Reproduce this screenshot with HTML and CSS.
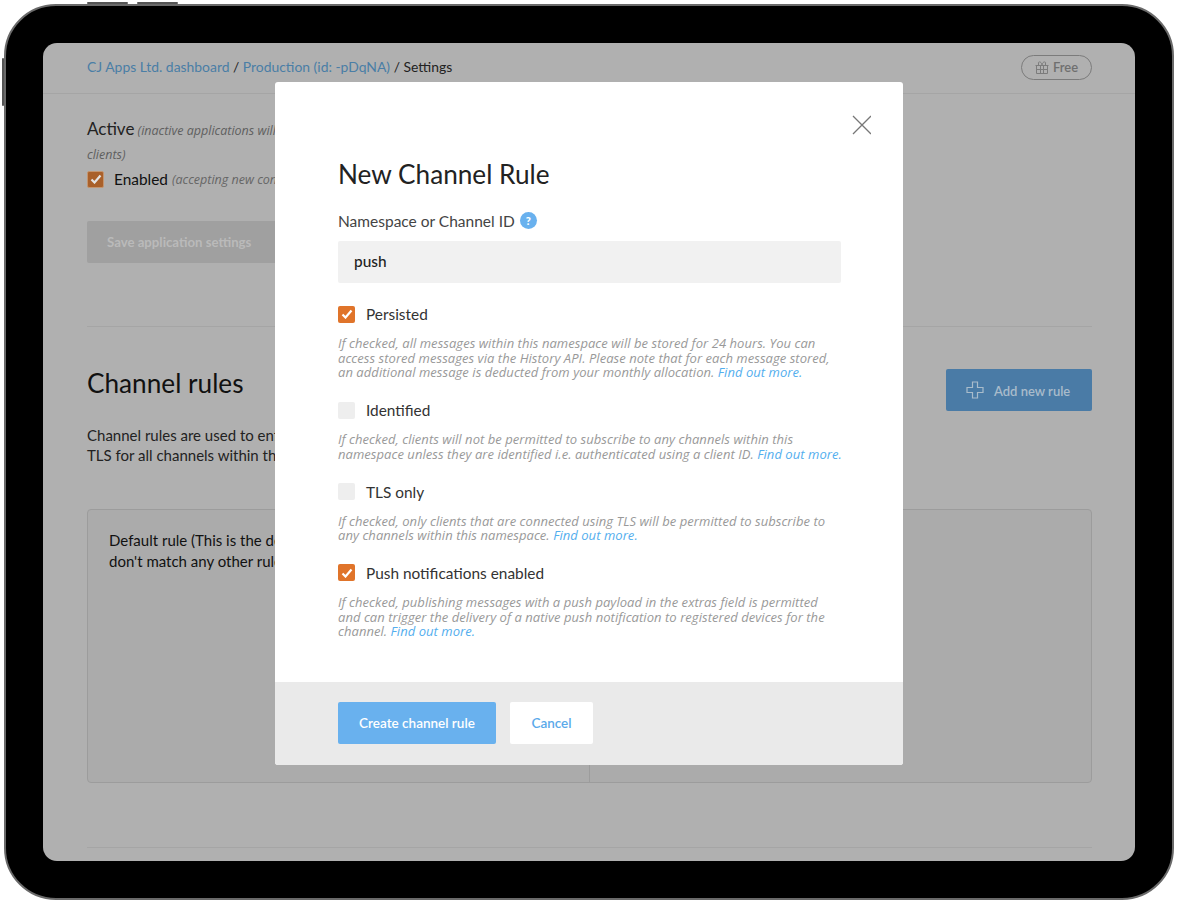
FILE: index.html
```html
<!DOCTYPE html>
<html lang="en">
<head>
    <meta charset="UTF-8">
    <title>Settings | CJ Apps Ltd.</title>
    <link rel="stylesheet" href="styles.css">
</head>
<body>
    <div class="device">
        <span class="side-btn top-a"></span>
        <span class="side-btn top-b"></span>
        <span class="side-btn left-a"></span>
        <div class="screen">
            <header class="topbar">
                <div class="crumbs"><a>CJ Apps Ltd. dashboard</a> / <a>Production (id: -pDqNA)</a> / Settings</div>
                <div class="plan">
                    <svg width="14" height="13" viewBox="0 0 14 13" fill="none" stroke="#7c7c7c" stroke-width="1">
                        <path d="M1.500 4.500h11v8h-11zM.5 4.500h13M1.500 8.500h11M5.500 4.500v8M8.500 4.500v8M3.500 4.500V1.500c0-1 3.500-1 3.500 3M10.500 4.500V1.500c0-1-3.500-1-3.500 3"/>
                    </svg>
                    Free
                </div>
            </header>

            <section class="settings">
                <p class="active"><span class="big">Active</span> <em>(inactive applications will not<br>clients)</em></p>
                <div class="enabled">
                    <span class="check dim"><svg width="12" height="10" viewBox="0 0 12 10"><path d="M1.500 5.500l3 3 6-7" fill="none" stroke="#e4e4e4" stroke-width="2.200"/></svg></span>
                    <span class="enabled-text">Enabled</span> <em>(accepting new connections)</em>
                </div>
                <div class="save-btn">Save application settings</div>
            </section>

            <section class="rules">
                <div class="rules-head">
                    <h2>Channel rules</h2>
                    <div class="add-btn">
                        <svg width="18" height="18" viewBox="0 0 18 18" fill="none" stroke="#a9bccb" stroke-width="1.200">
                            <path d="M6.500 1h5v5.500H17v5h-5.500V17h-5v-5.500H1v-5h5.500z"/>
                        </svg>
                        <span>Add new rule</span>
                    </div>
                </div>
                <p class="rules-text">Channel rules are used to enforce<br>TLS for all channels within this</p>
                <div class="rule-table">
                    <div class="rule-cell">Default rule (This is the default<br>don't match any other rules)</div>
                    <div class="rule-cell"></div>
                </div>
            </section>
            <div class="bottom-line"></div>

            <div class="modal">
                <button class="close" aria-label="Close">
                    <svg width="20" height="20" viewBox="0 0 20 20" stroke="#777" stroke-width="1.300"><path d="M2 1l18 18M20 1L2 19"/></svg>
                </button>
                <div class="modal-body">
                    <h1>New Channel Rule</h1>
                    <div class="field-label">Namespace or Channel ID <span class="help">?</span></div>
                    <div class="input">push</div>

                    <div class="opt">
                        <span class="check on"><svg width="12" height="10" viewBox="0 0 12 10"><path d="M1.500 5.500l3 3 6-7" fill="none" stroke="#fff" stroke-width="2.200"/></svg></span>
                        Persisted
                    </div>
                    <p class="hint">If checked, all messages within this namespace will be stored for 24 hours. You can<br>access stored messages via the History API. Please note that for each message stored,<br>an additional message is deducted from your monthly allocation. <a>Find out more.</a></p>

                    <div class="opt">
                        <span class="check"></span>
                        Identified
                    </div>
                    <p class="hint">If checked, clients will not be permitted to subscribe to any channels within this<br>namespace unless they are identified i.e. authenticated using a client ID. <a>Find out more.</a></p>

                    <div class="opt">
                        <span class="check"></span>
                        TLS only
                    </div>
                    <p class="hint">If checked, only clients that are connected using TLS will be permitted to subscribe to<br>any channels within this namespace. <a>Find out more.</a></p>

                    <div class="opt">
                        <span class="check on"><svg width="12" height="10" viewBox="0 0 12 10"><path d="M1.500 5.500l3 3 6-7" fill="none" stroke="#fff" stroke-width="2.200"/></svg></span>
                        Push notifications enabled
                    </div>
                    <p class="hint">If checked, publishing messages with a push payload in the extras field is permitted<br>and can trigger the delivery of a native push notification to registered devices for the<br>channel. <a>Find out more.</a></p>
                </div>
                <div class="modal-foot">
                    <div class="btn primary">Create channel rule</div>
                    <div class="btn cancel">Cancel</div>
                </div>
            </div>
        </div>
    </div>
</body>
</html>
```

FILE: styles.css
```css
* {
    box-sizing: border-box;
}
body {
    margin: 0;
    background-color: #fff;
    font-family: Lato, "Open Sans", sans-serif;
    color: #222;
}
em {
    font-family: "Open Sans", sans-serif;
    font-style: italic;
}

/* tablet frame */
.device {
    position: relative;
    width: 1170px;
    height: 896px;
    margin: 4px 0 0 4px;
    padding: 37px 37px 36px 37px;
    background-color: #000;
    border: 2px solid #6a6a6a;
    border-radius: 52px;
}
.side-btn {
    position: absolute;
    background-color: #555;
    border-radius: 1px;
}
.top-a {
    top: -4px;
    left: 81px;
    width: 41px;
    height: 2px;
}
.top-b {
    top: -4px;
    left: 131px;
    width: 41px;
    height: 2px;
}
.left-a {
    top: 52px;
    left: -4px;
    width: 2px;
    height: 48px;
}
.screen {
    position: relative;
    height: 818px;
    padding: 0 43px 0 44px;
    background-color: #b0b0b0;
    border-radius: 14px;
    overflow: hidden;
    font-size: 14px;
}

/* dimmed page behind the modal */
.topbar {
    display: flex;
    justify-content: space-between;
    align-items: center;
    height: 51px;
    margin: 0 -43px 0 -44px;
    padding: 0 43px 2px 44px;
    border-bottom: 1px solid #a5a5a5;
    font-size: 13.900px;
}
.crumbs {
    margin-bottom: 2px;
}
.crumbs a {
    color: #4a7ea6;
}
.plan {
    display: flex;
    align-items: center;
    justify-content: center;
    gap: 4px;
    width: 71px;
    height: 25px;
    border: 1px solid #7b7b7b;
    border-radius: 13px;
    color: #6f6f6f;
    font-size: 13px;
    font-weight: 600;
}
.settings {
    padding-top: 23px;
    height: 233px;
    border-bottom: 1px solid #a5a5a5;
}
.active {
    margin: 0;
    line-height: 24px;
    color: #5f5f5f;
    font-size: 12.500px;
}
.big {
    color: #222;
    font-size: 17px;
}
.enabled {
    display: flex;
    align-items: center;
    gap: 4px;
    margin-top: 3px;
    font-size: 12.500px;
    color: #666;
}
.enabled-text {
    color: #111;
    font-size: 15.400px;
    margin-left: 6px;
}
.save-btn {
    width: 240px;
    height: 42px;
    margin-top: 33px;
    padding-left: 20px;
    background-color: #a0a0a0;
    border-radius: 2px;
    color: #bababa;
    font-size: 13.200px;
    font-weight: 700;
    line-height: 42px;
}
.rules {
    padding-top: 42px;
}
.rules-head {
    display: flex;
    justify-content: space-between;
    align-items: flex-start;
    height: 42px;
}
.rules-head h2 {
    margin: 0;
    font-size: 26.200px;
    line-height: 28px;
    font-weight: 400;
    color: #111;
}
.add-btn {
    display: flex;
    align-items: center;
    gap: 10px;
    width: 146px;
    height: 42px;
    padding-left: 20px;
    background-color: #4a7ba6;
    border-radius: 2px;
    color: #a9bccb;
    font-size: 13px;
    font-weight: 600;
}
.add-btn span {
    margin-top: 2px;
}
.rules-text {
    margin: 14px 0 0;
    font-size: 15px;
    line-height: 20px;
    color: #222;
}
.rule-table {
    display: flex;
    height: 274px;
    margin-top: 44px;
    background-color: #ababab;
    border: 1px solid #9c9c9c;
    border-radius: 4px;
}
.rule-cell {
    flex: 1;
    padding: 20px 21px;
    font-size: 15px;
    line-height: 21px;
    color: #111;
}
.rule-cell + .rule-cell {
    border-left: 1px solid #9c9c9c;
}
.bottom-line {
    margin-top: 64px;
    border-top: 1px solid #a5a5a5;
}

/* modal */
.modal {
    position: absolute;
    top: 39px;
    left: 232px;
    width: 628px;
    height: 683px;
    background-color: #fff;
    border-radius: 3px;
}
.close {
    position: absolute;
    top: 33px;
    right: 32px;
    padding: 0;
    border: 0;
    background: none;
}
.modal-body {
    height: 600px;
    padding: 75px 62px 0 63px;
}
.modal h1 {
    margin: 0;
    height: 34px;
    font-size: 26.200px;
    line-height: 34px;
    font-weight: 400;
    color: #222;
}
.field-label {
    display: flex;
    align-items: center;
    gap: 5px;
    height: 18px;
    margin-top: 21px;
    padding-bottom: 1px;
    font-size: 15.500px;
    color: #444;
}
.help {
    width: 17px;
    height: 17px;
    border-radius: 50%;
    background-color: #69b1ee;
    color: #fff;
    font-size: 11px;
    font-weight: 900;
    line-height: 17px;
    text-align: center;
}
.input {
    height: 42px;
    margin-top: 11px;
    margin-bottom: 22px;
    padding-left: 16px;
    background-color: #f1f1f1;
    border-radius: 2px;
    font-size: 15.400px;
    font-weight: 500;
    line-height: 40px;
    color: #222;
}
.opt {
    display: flex;
    align-items: center;
    gap: 11px;
    height: 18px;
    margin-top: 21px;
    font-size: 15.400px;
    color: #333;
}
.input + .opt {
    margin-top: 0;
}
.check {
    display: flex;
    align-items: center;
    justify-content: center;
    flex: none;
    width: 17px;
    height: 17px;
    background-color: #eee;
    border-radius: 2px;
}
.check.on {
    background-color: #e0742a;
}
.check.dim {
    background-color: #a9602a;
    border: 1px solid #c4956f;
}
.hint {
    margin: 13px 0 0;
    font-family: "Open Sans", sans-serif;
    font-size: 13px;
    font-style: italic;
    letter-spacing: 0.050px;
    line-height: 14.700px;
    white-space: nowrap;
    color: #999;
}
.hint a {
    color: #53aeee;
}
.modal-foot {
    display: flex;
    gap: 15px;
    height: 83px;
    padding: 20px 63px;
    background-color: #eaeaea;
    border-radius: 0 0 3px 3px;
}
.btn {
    height: 42px;
    border-radius: 2px;
    font-size: 13.500px;
    font-weight: 600;
    line-height: 42px;
    text-align: center;
}
.primary {
    width: 158px;
    background-color: #69b1ee;
    color: #fff;
}
.cancel {
    width: 83px;
    margin-left: -1px;
    background-color: #fff;
    color: #5aa9ea;
}
```
